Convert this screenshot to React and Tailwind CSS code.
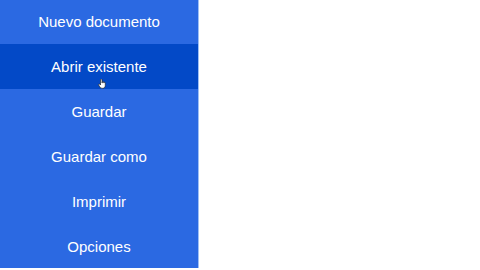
const items = ['Nuevo documento', 'Abrir existente', 'Guardar', 'Guardar como', 'Imprimir', 'Opciones'];

function HandCursor() {
  return (
    <svg className="absolute left-[98px] top-[35px]" width="8" height="10" viewBox="0 0 16 20">
      <path
        d="M5 1.5a1.5 1.5 0 013 0V8h.5V6.5a1.5 1.5 0 013 0V8h.3V7.5a1.4 1.4 0 012.7 0V13c0 3-2 5.5-5 5.5H8c-2 0-3.2-1-4.2-2.5L1.3 12a1.4 1.4 0 012.2-1.7L5 12z"
        fill="#fff"
        stroke="#222"
        strokeWidth="1.3"
        strokeLinejoin="round"
      />
    </svg>
  );
}

export default function App() {
  return (
    <div className="flex h-[270px] w-[480px] overflow-hidden bg-white" style={{ fontFamily: '"Liberation Sans", Arial, sans-serif' }}>
      <nav className="flex h-[268px] w-[199px] flex-col border-r border-[#9fc0f5] bg-[#2b69e2]">
        {items.map((label, i) => (
          <div
            key={label}
            className={`relative flex shrink-0 items-center justify-center pt-[1px] text-[15px] text-white ${
              i === 0 ? 'h-[44px]' : 'h-[45px]'
            } ${i === 1 ? 'bg-[#0349c7]' : ''}`}
          >
            {label}
            {i === 1 && <HandCursor />}
          </div>
        ))}
      </nav>
      <div className="flex-1" />
    </div>
  );
}
